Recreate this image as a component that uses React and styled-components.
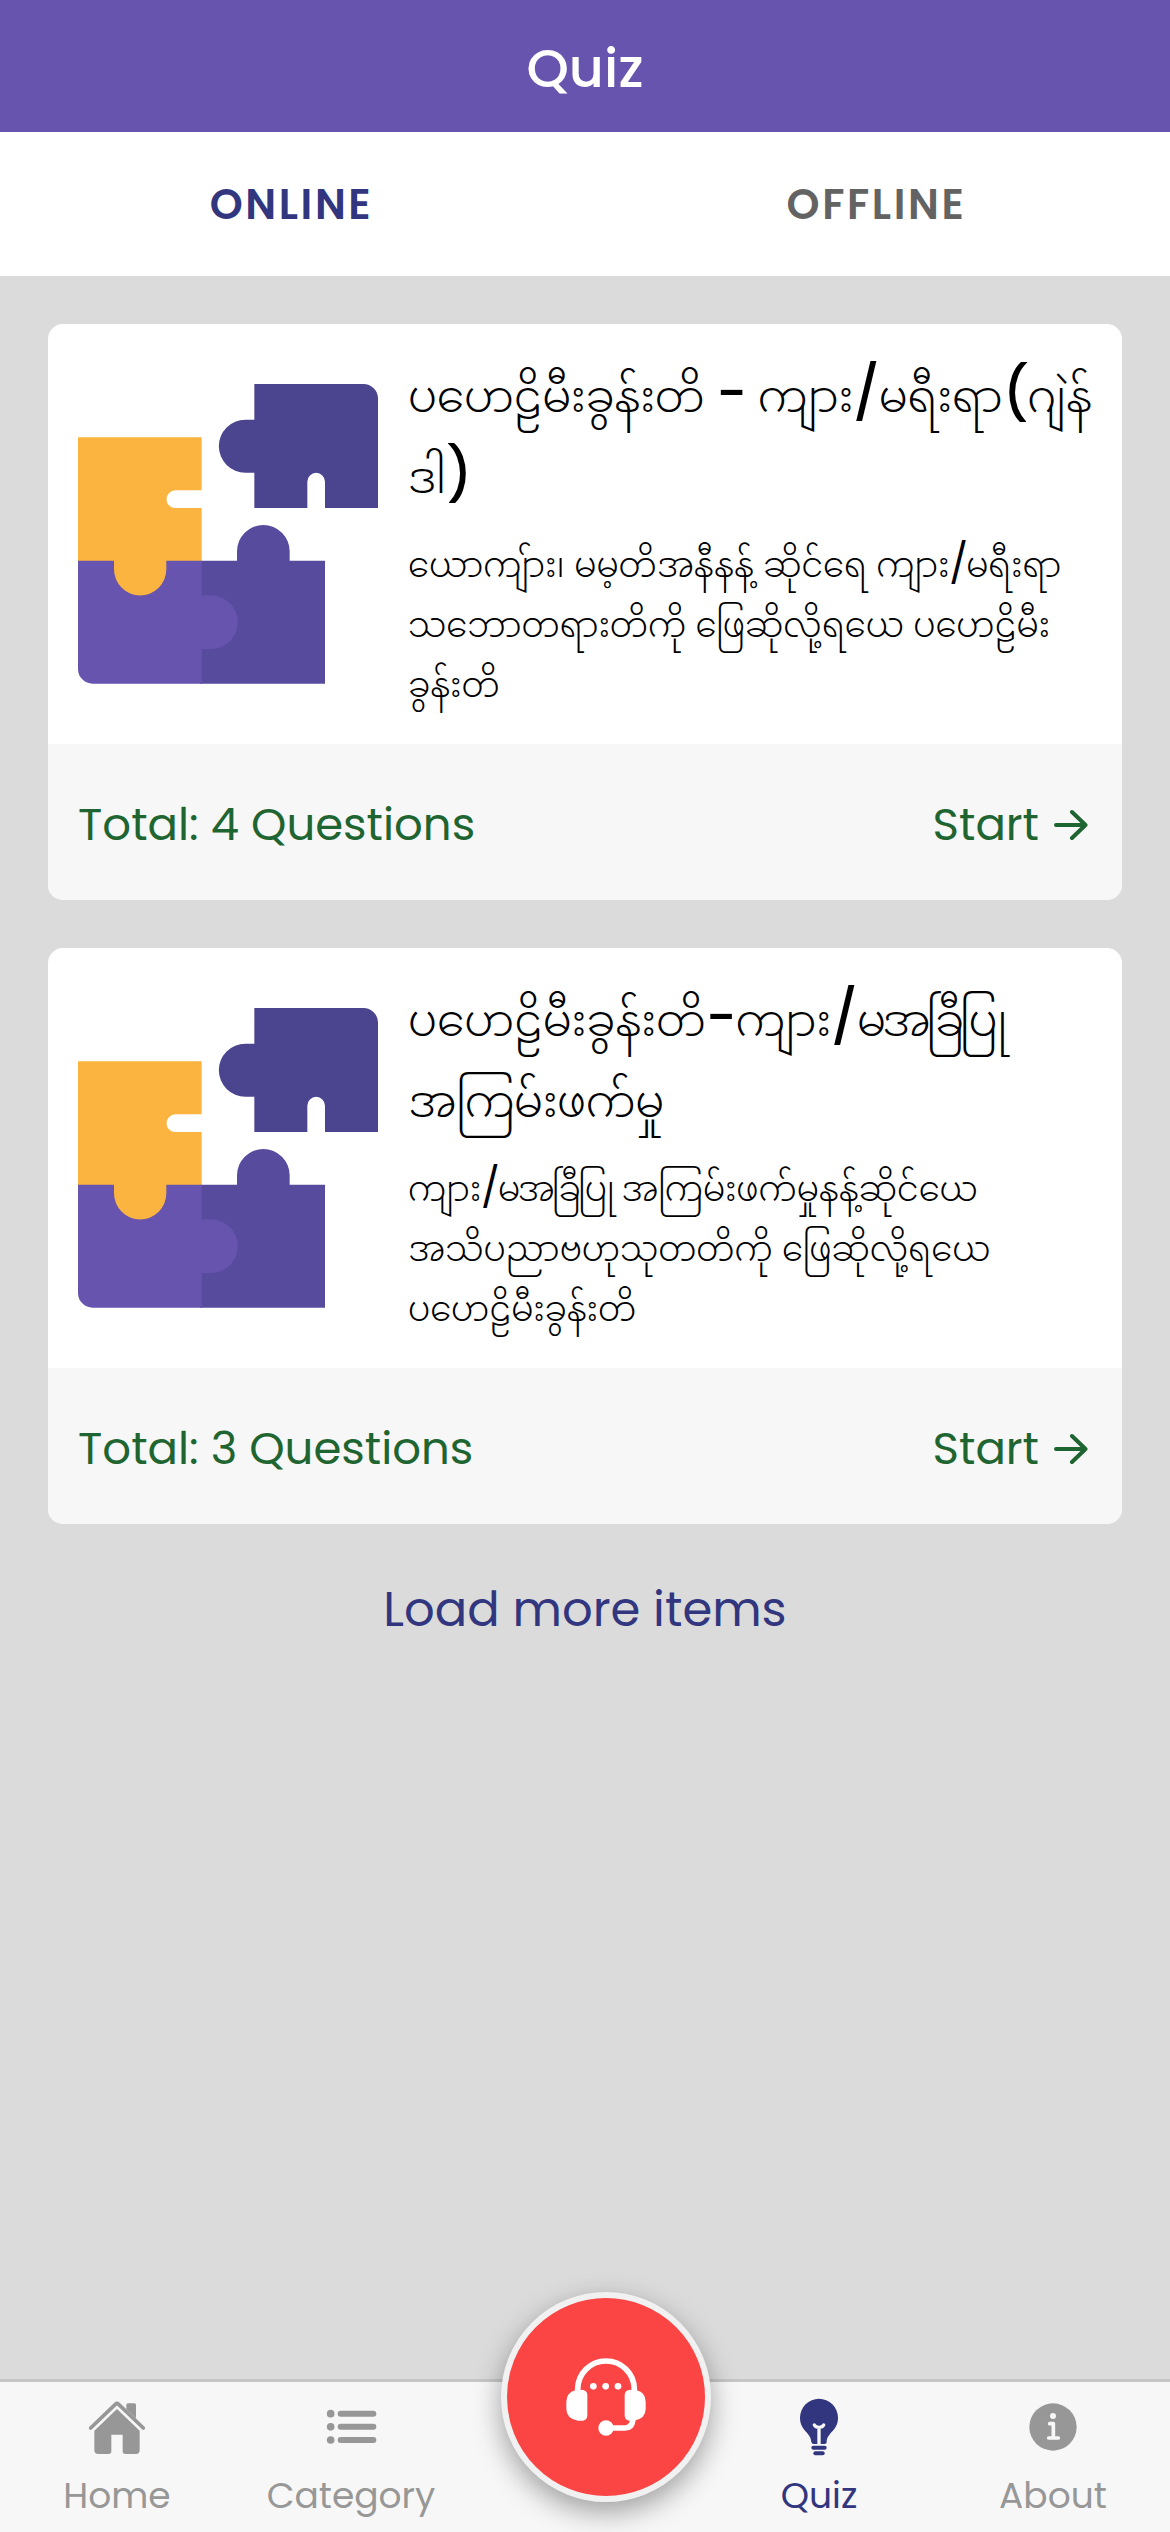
import React from "react";
import styled, { createGlobalStyle } from "styled-components";

const Global = createGlobalStyle`
  * { box-sizing: border-box; }
  body { margin: 0; background: #dbdbdb; }
`;

const Screen = styled.div`
  width: 1170px;
  height: 2532px;
  display: flex;
  flex-direction: column;
  background: #dbdbdb;
  overflow: hidden;
  font-family: Poppins, Inter, "Noto Sans Myanmar", "Noto Sans", sans-serif;
  font-feature-settings: "cv11";
`;

const Header = styled.header`
  height: 132px;
  flex: none;
  display: flex;
  align-items: center;
  justify-content: center;
  padding-top: 4px;
  background: #6654ae;
  color: #fff;
  font-size: 54px;
  font-weight: 500;
`;

const Tabs = styled.nav`
  height: 144px;
  flex: none;
  display: grid;
  grid-template-columns: 1fr 1fr;
  background: #fff;
`;

const Tab = styled.button`
  border: 0;
  padding: 0 2px 0 0;
  background: none;
  font: inherit;
  font-size: 42px;
  font-weight: 600;
  letter-spacing: 2.6px;
  color: ${(p) => (p.$active ? "#31367f" : "#636363")};
`;

const Content = styled.main`
  flex: 1;
  display: flex;
  flex-direction: column;
  gap: 48px;
  padding: 48px;
`;

const Card = styled.article`
  height: 576px;
  flex: none;
  display: flex;
  flex-direction: column;
  border-radius: 15px;
  overflow: hidden;
  background: #fff;
`;

const CardBody = styled.div`
  height: 420px;
  display: flex;
  gap: 30px;
  padding: 0 0 0 30px;
`;

const Picture = styled.svg`
  width: 300px;
  height: 300px;
  flex: none;
  margin-top: 60px;
`;

const CardText = styled.div`
  display: flex;
  flex-direction: column;
  padding-top: 32px;
  color: #000;
  white-space: nowrap;
`;

const Title = styled.h2`
  margin: 0 0 17px;
  font-size: 44.4px;
  font-weight: 300;
`;

const Description = styled.p`
  margin: 0;
  font-size: 34px;
  font-weight: 300;
`;

const Line = styled.span`
  display: block;
  height: ${(p) => p.$h}px;
  line-height: ${(p) => p.$h}px;
  letter-spacing: ${(p) => p.$ls || 0}px;
`;

const Latin = styled.span`
  line-height: 1;
  margin-right: ${(p) => (p.$strong ? -1 : -2)}px;
  font-size: ${(p) => (p.$strong ? 52.5 : 39.5)}px;
  font-weight: ${(p) => (p.$strong ? 500 : 400)};
`;

const Tight = styled.span`
  letter-spacing: ${(p) => (p.$strong ? -4 : -2.6)}px;
`;

const CardFooter = styled.footer`
  height: 156px;
  display: flex;
  align-items: center;
  justify-content: space-between;
  padding: 5px 34px 0 30px;
  background: #f7f7f7;
  color: #1f6531;
  font-size: 45px;
`;

const Start = styled.span`
  display: flex;
  align-items: center;
  gap: 15px;
`;

const LoadMore = styled.button`
  align-self: center;
  margin-top: 2px;
  border: 0;
  padding: 0;
  background: none;
  font: inherit;
  font-size: 48px;
  line-height: 72px;
  color: #31367f;
`;

const BottomBar = styled.nav`
  height: 153px;
  flex: none;
  display: grid;
  grid-template-columns: repeat(5, 1fr);
  background: #f7f7f7;
  border-top: 3px solid #c6c6c6;
`;

const NavItem = styled.div`
  display: flex;
  flex-direction: column;
  align-items: center;
  padding-top: 15px;
  font-size: 36px;
  color: ${(p) => (p.$active ? "#31367f" : "#979797")};
`;

const IconSlot = styled.span`
  height: 60px;
  display: flex;
  align-items: center;
`;

const NavLabel = styled.span`
  margin-top: 18px;
  line-height: 42px;
`;

const FabSlot = styled.div`
  position: relative;
`;

const Fab = styled.button`
  position: absolute;
  left: 33px;
  top: -90px;
  width: 210px;
  height: 210px;
  padding: 0;
  display: flex;
  align-items: center;
  justify-content: center;
  border: 6px solid #f1f1f1;
  border-radius: 50%;
  background: #fb4444;
  box-shadow: 0 10px 28px rgba(0, 0, 0, 0.36);
`;

const Puzzle = () => (
  <Picture viewBox="114 223 900 900">
    <path fill="#574b9e" d="M480 753H591V725a79 79 0 0 1 158 0V753H855V1122H480Z" />
    <path fill="#6654ae" d="M114 750H485V857H513a80 80 0 0 1 0 161H485V1122H158a44 44 0 0 1-44-44Z" />
    <path fill="#fbb43f" d="M114 383H485V542H406a26 26 0 0 0 0 53H485V753H379V779a78.500 78.500 0 0 1-157 0V753H114Z" />
    <path fill="#4b4590" d="M643 223H970a44 44 0 0 1 44 44V595H855V516a26.500 26.500 0 0 0-53 0V595H643V489H616a79.500 79.500 0 0 1 0-159H643Z" />
  </Picture>
);

const Arrow = () => (
  <svg width="34" height="32" viewBox="0 0 34 32" fill="none" stroke="currentColor" strokeWidth="4" strokeLinecap="round" strokeLinejoin="round">
    <path d="M2 16H31M18 3L31.500 16L18 29" />
  </svg>
);

const HomeIcon = () => (
  <svg width="58" height="55" viewBox="264 388 174 165" fill="currentColor">
    <path d="M272 472L346 401Q351 396 356 401L430 472" fill="none" stroke="currentColor" strokeWidth="11" strokeLinecap="round" />
    <path d="M379 416V403Q379 398 384 398H403Q408 398 408 403V443Z" />
    <path d="M351 415L419 480V538Q419 550 407 550H376Q368 550 368 542V492H334V542Q334 550 326 550H295Q283 550 283 538V480Z" />
  </svg>
);

const ListIcon = () => (
  <svg width="51" height="36" viewBox="977 417 153 108" fill="currentColor">
    {[431, 470.5, 510].map((y) => (
      <g key={y}>
        <circle cx="991" cy={y} r="11.500" />
        <rect x="1012" y={y - 9} width="116" height="18" rx="9" />
      </g>
    ))}
  </svg>
);

const BulbIcon = () => (
  <svg width="40" height="58" viewBox="147 114 120 174" fill="currentColor">
    <path d="M207 116A57.500 57.500 0 0 1 264 173C264 213 231 216 230 246Q230 252 224 252H191Q185 252 184 246C183 216 150 213 150 173A57.500 57.500 0 0 1 207 116Z" />
    <path d="M193 195Q197 202 207 202Q217 202 221 195M207 203V254" fill="none" stroke="#f7f7f7" strokeWidth="10" strokeLinecap="round" />
    <rect x="184" y="257" width="46" height="12" rx="6" />
    <rect x="190" y="274" width="34" height="12" rx="6" />
  </svg>
);

const InfoIcon = () => (
  <svg width="48" height="48" viewBox="837 129 144 144">
    <circle cx="909" cy="201" r="71" fill="currentColor" />
    <circle cx="909" cy="168" r="9" fill="#f7f7f7" />
    <path d="M899 191H910V234M896 234H925" fill="none" stroke="#f7f7f7" strokeWidth="11" strokeLinecap="round" strokeLinejoin="round" />
  </svg>
);

const Headset = () => (
  <svg width="80" height="78" viewBox="288 264 240 234" fill="#fff">
    <path d="M323 365V358a84.500 84.500 0 0 1 170 0V365" fill="none" stroke="#fff" strokeWidth="17" />
    <path d="M316 361Q325 358 340 360Q352 363 352 376V436Q352 450 339 452H324Q289 446 289 417V395Q289 368 316 361Z" />
    <path d="M500 361Q491 358 476 360Q464 363 464 376V436Q464 450 477 452H492Q527 446 527 417V395Q527 368 500 361Z" />
    <path d="M489 448Q486 474 465 474H408" fill="none" stroke="#fff" strokeWidth="17" />
    <circle cx="408" cy="474" r="23" />
    <circle cx="370" cy="349" r="10" />
    <circle cx="407" cy="349" r="10" />
    <circle cx="444" cy="349" r="10" />
  </svg>
);

const quizzes = [
  {
    title: [{ t: "ပဟေဠိမီးခွန်းတိ - ကျား/မရီးရာ(ဂျဲန်", ls: -0.2 }, { t: "ဒါ)" }],
    text: [
      { t: "ယောကျ်ား၊ မမ့တိအနီနန့် ဆိုင်ရေ ကျား/မရီးရာ" },
      { t: "သဘောတရားတိကို ဖြေဆိုလို့ရယေ ပဟေဠိမီး" },
      { t: "ခွန်းတိ" },
    ],
    total: 4,
  },
  {
    title: [{ t: "ပဟေဠိမီးခွန်းတိ-ကျား/မအခြီပြု" }, { t: "အကြမ်းဖက်မှု", ls: -0.4 }],
    text: [
      { t: "ကျား/မအခြီပြု အကြမ်းဖက်မှုနန့်ဆိုင်ယေ" },
      { t: "အသိပညာဗဟုသုတတိကို ဖြေဆိုလို့ရယေ" },
      { t: "ပဟေဠိမီးခွန်းတိ" },
    ],
    total: 3,
  },
];

/* Latin punctuation is set larger than the script around it; the wide medial clusters are set closer. */
const mixed = (text, strong) =>
  text
    .split(/([-/()]|မအခြီပြု)/)
    .filter(Boolean)
    .map((run, i) => {
      if (/^[-/()]$/.test(run)) return <Latin key={i} $strong={strong}>{run}</Latin>;
      if (run === "မအခြီပြု") return <Tight key={i} $strong={strong}>{run}</Tight>;
      return run;
    });

export default function App() {
  return (
    <Screen>
      <Global />
      <Header>Quiz</Header>
      <Tabs>
        <Tab $active>ONLINE</Tab>
        <Tab>OFFLINE</Tab>
      </Tabs>
      <Content>
        {quizzes.map((q) => (
          <Card key={q.total}>
            <CardBody>
              <Puzzle />
              <CardText>
                <Title>
                  {q.title.map((l) => (
                    <Line key={l.t} $h={81} $ls={l.ls}>{mixed(l.t, true)}</Line>
                  ))}
                </Title>
                <Description>
                  {q.text.map((l) => (
                    <Line key={l.t} $h={60} $ls={l.ls}>{mixed(l.t, false)}</Line>
                  ))}
                </Description>
              </CardText>
            </CardBody>
            <CardFooter>
              <span>Total: {q.total} Questions</span>
              <Start>Start <Arrow /></Start>
            </CardFooter>
          </Card>
        ))}
        <LoadMore>Load more items</LoadMore>
      </Content>
      <BottomBar>
        <NavItem><IconSlot><HomeIcon /></IconSlot><NavLabel>Home</NavLabel></NavItem>
        <NavItem><IconSlot><ListIcon /></IconSlot><NavLabel>Category</NavLabel></NavItem>
        <FabSlot><Fab aria-label="Support"><Headset /></Fab></FabSlot>
        <NavItem $active><IconSlot><BulbIcon /></IconSlot><NavLabel>Quiz</NavLabel></NavItem>
        <NavItem><IconSlot><InfoIcon /></IconSlot><NavLabel>About</NavLabel></NavItem>
      </BottomBar>
    </Screen>
  );
}
